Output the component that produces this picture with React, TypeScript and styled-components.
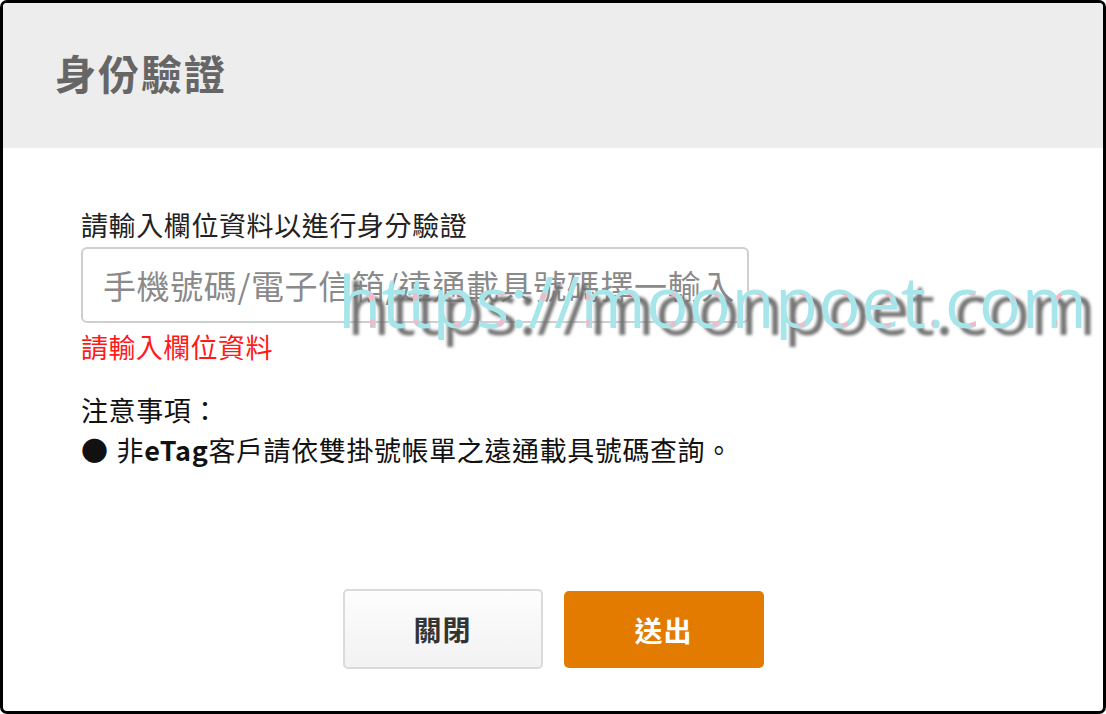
import React from "react";
import styled, { createGlobalStyle } from "styled-components";

const GlobalStyle = createGlobalStyle`
  html, body {
    margin: 0;
    padding: 0;
    background: #ffffff;
  }
  * {
    box-sizing: border-box;
  }
`

const FONT = `"Microsoft JhengHei", "Noto Sans CJK TC", "Noto Sans", sans-serif`

const Modal = styled.div`
  position: relative;
  width: 1106px;
  height: 714px;
  border: 3px solid #000;
  border-radius: 7px;
  overflow: hidden;
  display: flex;
  flex-direction: column;
  background: #fff;
  font-family: ${FONT};
`

const Header = styled.div`
  height: 145px;
  background-color: #ededed;
  display: flex;
  align-items: center;
  padding: 0 0 8px 52px;
`

const Title = styled.h2`
  margin: 0;
  font-size: 41px;
  font-weight: 700;
  color: #666;
  letter-spacing: 2px;
`

const Body = styled.div`
  flex: 1;
  padding: 57px 78px 0;
  display: flex;
  flex-direction: column;
`

const Label = styled.div`
  font-size: 27px;
  line-height: 40px;
  letter-spacing: 0.6px;
  color: #222;
  margin-bottom: 2px;
`

const Input = styled.input`
  width: 668px;
  height: 76px;
  border: 2px solid #cfcfcf;
  border-radius: 6px;
  padding: 0 6px 0 20px;
  font-family: ${FONT};
  font-size: 33px;
  letter-spacing: 0.6px;
  color: #333;
  outline: none;
  &::placeholder {
    color: #8a8a8a;
  }
`

const ErrorText = styled.div`
  font-size: 27px;
  line-height: 40px;
  letter-spacing: 0.4px;
  color: #ff1a1a;
  margin-top: 4px;
`

const Notes = styled.div`
  margin-top: 23px;
  font-size: 27px;
  line-height: 40px;
  letter-spacing: 0.6px;
  color: #111;
`

const Bullet = styled.span`
  margin-right: 8px;
`

const Strong = styled.b`
  font-weight: 600;
`

const Footer = styled.div`
  display: flex;
  justify-content: center;
  gap: 21px;
  padding-bottom: 42px;
`

const Button = styled.button<{ $primary?: boolean }>`
  width: 200px;
  border-radius: 5px;
  font-family: ${FONT};
  font-size: 28px;
  font-weight: 700;
  letter-spacing: 1px;
  cursor: pointer;
  border: ${p => p.$primary ? "none" : "2px solid #dadada"};
  background: ${p => p.$primary ? "#e37b00" : "linear-gradient(#fdfdfd, #f2f2f2)"};
  color: ${p => p.$primary ? "#fff" : "#333"};
  margin-top: ${p => p.$primary ? "2px" : "0"};
  height: ${p => p.$primary ? "77px" : "80px"};
`

// watermark drawn over the dialog: cyan face with pink dots and a grey drop shadow
const Watermark = styled.div`
  position: absolute;
  left: 335px;
  top: 259px;
  font-family: "Open Sans", "Noto Sans", sans-serif;
  font-size: 71px;
  font-weight: 500;
  letter-spacing: 0px;
  line-height: 1.1;
  color: transparent;
  background:
    radial-gradient(circle, #f3b9c9 3px, transparent 4.5px) 12px 22px / 43px 26px,
    #a6e5ea;
  -webkit-background-clip: text;
  background-clip: text;
  filter: drop-shadow(9px 7px 1.5px rgba(110, 110, 110, 0.95));
  pointer-events: none;
  white-space: nowrap;
`

export default function App() {
  return (
    <>
      <GlobalStyle />
      <Modal>
        <Header>
          <Title>身份驗證</Title>
        </Header>
        <Body>
          <Label>請輸入欄位資料以進行身分驗證</Label>
          <Input placeholder="手機號碼/電子信箱/遠通載具號碼擇一輸入" />
          <ErrorText>請輸入欄位資料</ErrorText>
          <Notes>
            <div>注意事項：</div>
            <div><Bullet>●</Bullet>非<Strong>eTag</Strong>客戶請依雙掛號帳單之遠通載具號碼查詢。</div>
          </Notes>
        </Body>
        <Footer>
          <Button>關閉</Button>
          <Button $primary>送出</Button>
        </Footer>
        <Watermark>https://moonpoet.com</Watermark>
      </Modal>
    </>
  )
}
